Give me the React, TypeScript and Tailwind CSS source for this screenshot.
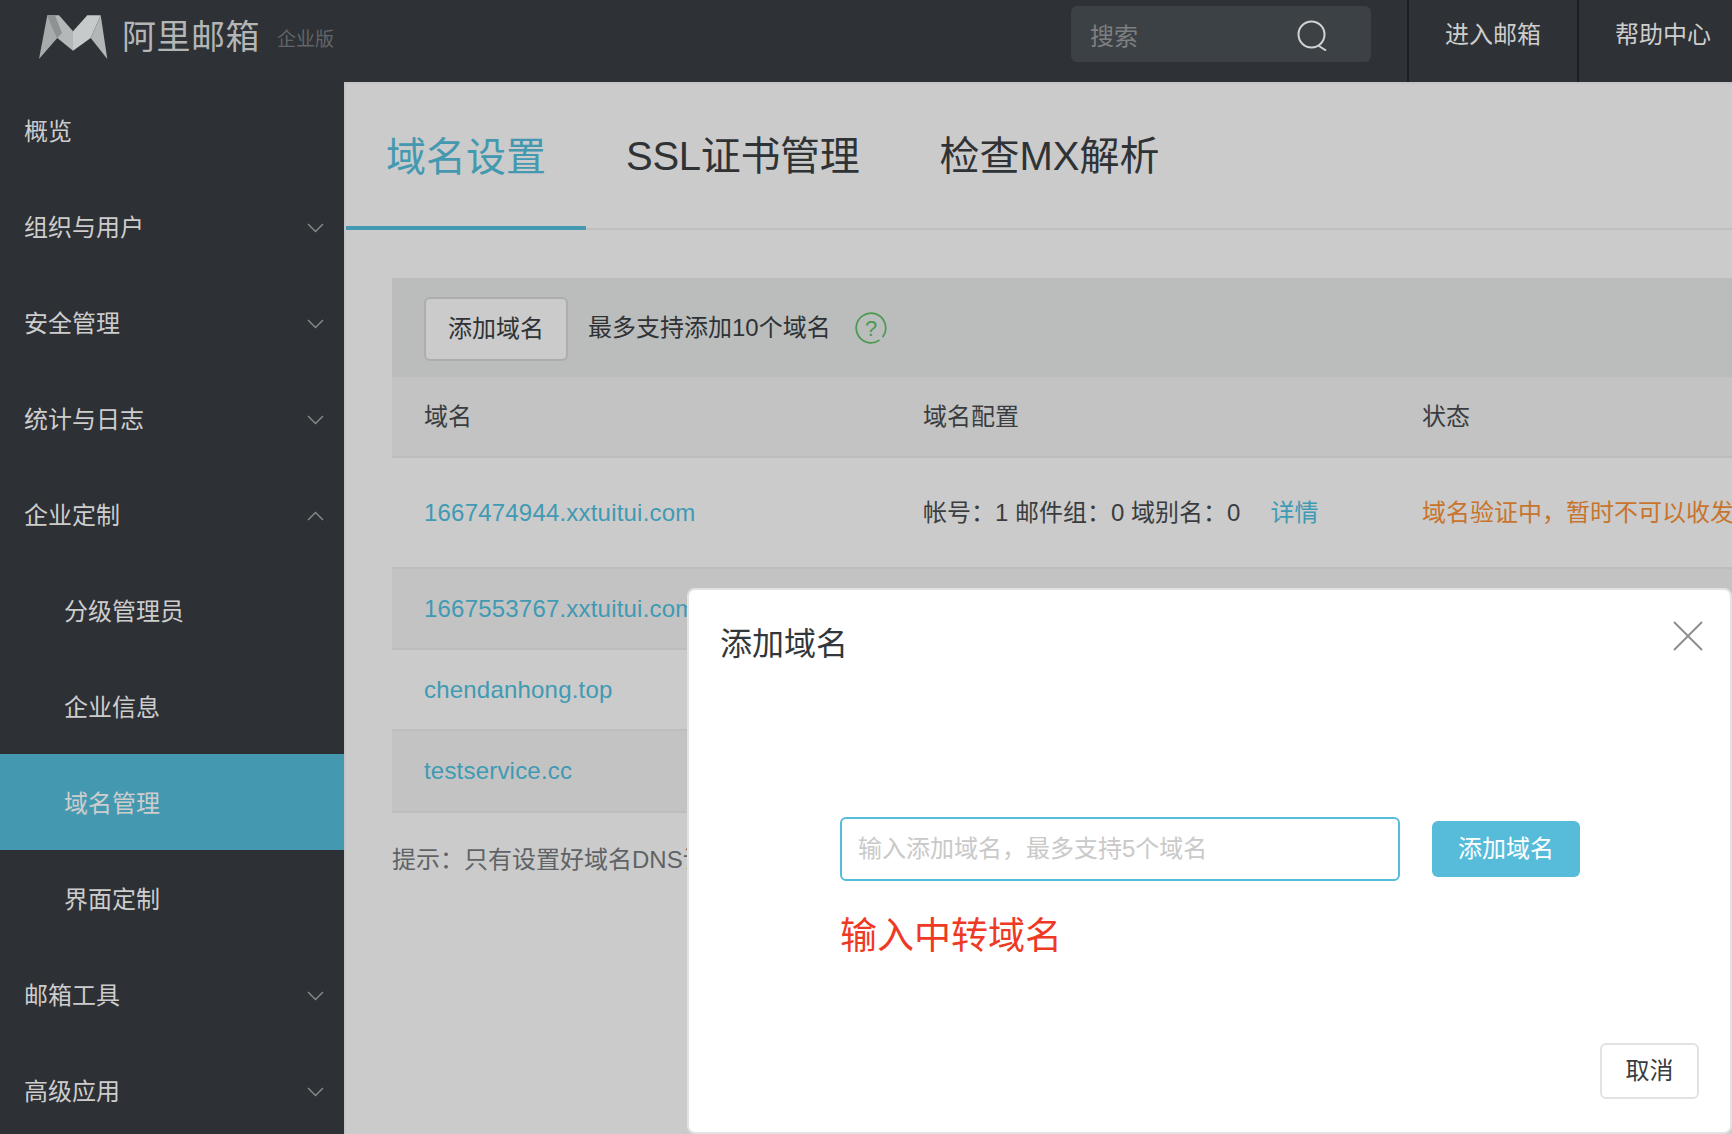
import React from 'react';

const fontStack = "font-['Liberation_Sans','Noto_Sans_CJK_SC',sans-serif]";

const menu = [
  { label: '概览' },
  { label: '组织与用户', arrow: 'down' },
  { label: '安全管理', arrow: 'down' },
  { label: '统计与日志', arrow: 'down' },
  { label: '企业定制', arrow: 'up' },
  { label: '分级管理员', sub: true },
  { label: '企业信息', sub: true },
  { label: '域名管理', sub: true, active: true },
  { label: '界面定制', sub: true },
  { label: '邮箱工具', arrow: 'down' },
  { label: '高级应用', arrow: 'down' },
];

const Chevron = ({ up }: { up?: boolean }) => (
  <svg width="17" height="10" viewBox="0 0 17 10" fill="none" className="shrink-0">
    <polyline
      points={up ? '1,9 8.5,1.5 16,9' : '1,1 8.5,8.5 16,1'}
      stroke="#8b8d8f"
      strokeWidth="1.3"
    />
  </svg>
);

const Logo = () => (
  <svg width="70" height="46" viewBox="0 0 70 46" className="shrink-0">
    <polygon points="1,45 9.3,1.3 19.3,24" fill="#a7abab" />
    <polygon points="9.3,1.3 21,1.3 35,17.3 35,36.7 19.3,24" fill="#b4b8b8" />
    <polygon points="9.3,1.3 17,1.3 24,19 19.3,24" fill="#8e9293" />
    <polygon points="49.3,1.3 62.7,1.3 52.7,24 35,36.7 35,17.3" fill="#c7caca" />
    <polygon points="62.7,1.3 69.3,45 52.7,24" fill="#b2b6b6" />
  </svg>
);

const SearchIcon = () => (
  <svg width="31" height="31" viewBox="0 0 31 31" fill="none" className="shrink-0">
    <circle cx="14.5" cy="14.5" r="13" stroke="#d2d2d2" strokeWidth="2" />
    <line x1="22" y1="26" x2="29" y2="30.5" stroke="#d2d2d2" strokeWidth="2" />
  </svg>
);

const HelpIcon = () => (
  <svg width="32" height="32" viewBox="0 0 32 32" fill="none" className="shrink-0">
    <circle
      cx="16"
      cy="16"
      r="14.8"
      stroke="#4b9a52"
      strokeWidth="1.8"
      strokeDasharray="88 5"
      transform="rotate(55 16 16)"
    />
    <text x="16" y="24" textAnchor="middle" fontSize="22" fill="#4b9a52" fontFamily="Liberation Sans">
      ?
    </text>
  </svg>
);

const CloseIcon = () => (
  <svg width="30" height="30" viewBox="0 0 30 30" fill="none" className="-mt-[2px]">
    <path d="M1 1 L29 29 M29 1 L1 29" stroke="#8f8f8f" strokeWidth="2" />
  </svg>
);

const Header = () => (
  <header className="flex h-[82px] shrink-0 items-stretch bg-[#2e3135]">
    <div className="flex flex-1 items-center pb-[8px] pl-[38px]">
      <Logo />
      <span className="ml-[14px] text-[34px] leading-[40px] tracking-[0.5px] text-[#b4b6b6]">阿里邮箱</span>
      <span className="mt-[6px] ml-[17px] text-[19px] leading-[24px] text-[#626568]">企业版</span>
    </div>
    <div className="flex items-center pr-[36px]">
      <div className="mb-[15px] flex h-[56px] w-[300px] items-center justify-between rounded-[6px] bg-[#3c4145] pt-[4px] pr-[43px] pl-[19px]">
        <span className="pt-[2px] text-[24px] leading-[32px] text-[#7d8082]">搜索</span>
        <SearchIcon />
      </div>
    </div>
    <div className="flex w-[170px] items-center border-l-2 border-[#1c1e21] pb-[12px] pl-[36px] text-[24px] leading-[32px] text-[#cdcdcd]">
      进入邮箱
    </div>
    <div className="flex w-[155px] items-center border-l-2 border-[#1c1e21] pb-[12px] pl-[36px] text-[24px] leading-[32px] whitespace-nowrap text-[#cdcdcd]">
      帮助中心
    </div>
  </header>
);

const Sidebar = () => (
  <aside className="w-[344px] shrink-0 bg-[#2d3034]">
    {menu.map((item) => (
      <div
        key={item.label}
        className={`flex h-24 items-center justify-between pt-[3px] pr-5 text-[24px] leading-[32px] text-[#cdcdcd] ${
          item.sub ? 'pl-[64px]' : 'pl-6'
        } ${item.active ? 'bg-[#4499b0]' : ''}`}
      >
        <span>{item.label}</span>
        {item.arrow && <Chevron up={item.arrow === 'up'} />}
      </div>
    ))}
  </aside>
);

const Tabs = () => (
  <div className="flex h-[146px] shrink-0 items-stretch border-b-2 border-[#bfbfbf] text-[40px] leading-[48px]">
    <div className="-mb-[2px] flex items-center border-b-4 border-[#4499b0] px-10 pt-[4px] text-[#4499b0]">域名设置</div>
    <div className="flex items-center px-10 tracking-[-0.3px] text-[#2f3336]">SSL证书管理</div>
    <div className="flex items-center px-10 text-[#2f3336]">检查MX解析</div>
  </div>
);

const DomainTable = () => (
  <div className="text-[24px] leading-[32px]">
    <div className="flex h-[99px] items-center bg-[#bbbdbc] pl-[32px] text-[#2f3336]">
      <button className="mt-[2px] h-[64px] w-[144px] rounded-[6px] border-2 border-[#adadad] bg-[#cbcbcb]">添加域名</button>
      <span className="mr-[24px] ml-[20px]">最多支持添加10个域名</span>
      <HelpIcon />
    </div>
    <div className="grid h-[81px] grid-cols-[499px_499px_1fr] items-center border-b-2 border-[#bdbdbd] bg-[#c3c3c3] pl-[32px] text-[#3a3d40]">
      <span>域名</span>
      <span>域名配置</span>
      <span>状态</span>
    </div>
    <div className="grid h-[111px] grid-cols-[499px_499px_1fr] items-center border-b-2 border-[#bdbdbd] pl-[32px]">
      <a className="tracking-[0.2px] text-[#3f9ab3]">1667474944.xxtuitui.com</a>
      <span className="whitespace-nowrap text-[#3a3d40]">
        帐号：1 邮件组：0 域别名：0<a className="ml-[30px] text-[#3f9ab3]">详情</a>
      </span>
      <span className="whitespace-nowrap text-[#c8742c]">域名验证中，暂时不可以收发邮件</span>
    </div>
    <div className="flex h-[81px] items-center border-b-2 border-[#bdbdbd] bg-[#c3c3c3] pl-[32px] tracking-[0.2px] text-[#3f9ab3]">
      1667553767.xxtuitui.com
    </div>
    <div className="flex h-[81px] items-center border-b-2 border-[#bdbdbd] pl-[32px] tracking-[0.2px] text-[#3f9ab3]">chendanhong.top</div>
    <div className="flex h-[82px] items-center border-b-2 border-[#bdbdbd] bg-[#c3c3c3] pl-[32px] tracking-[0.2px] text-[#3f9ab3]">testservice.cc</div>
  </div>
);

const AddDomainDialog = () => (
  <div className="absolute top-[588px] left-[687px] flex h-[546px] w-[1045px] flex-col rounded-[8px] border-2 border-[#e2e2e2] bg-white">
    <div className="flex items-start justify-between pt-[33px] pr-[27px] pl-[31px]">
      <span className="text-[32px] leading-[42px] text-[#33373a]">添加域名</span>
      <CloseIcon />
    </div>
    <div className="mt-[152px] flex items-center pl-[151px]">
      <div className="flex h-[64px] w-[560px] items-center rounded-[6px] border-2 border-[#56bcd9] pl-[16px] text-[24px] leading-[32px] text-[#c9c9c9]">
        输入添加域名，最多支持5个域名
      </div>
      <button className="ml-[32px] h-[56px] w-[148px] rounded-[6px] bg-[#56bcda] text-[24px] leading-[32px] text-white">添加域名</button>
    </div>
    <div className="mt-[32px] pl-[151px] text-[37px] leading-[48px] text-[#ee3a24]">输入中转域名</div>
    <div className="mt-auto flex justify-end pr-[31px] pb-[33px]">
      <button className="h-[56px] w-[99px] rounded-[6px] border-2 border-[#e2e2e2] text-[24px] leading-[32px] text-[#3a3d40]">取消</button>
    </div>
  </div>
);

export default function App() {
  return (
    <div className={`relative flex h-screen flex-col overflow-hidden bg-[#cbcbcb] ${fontStack}`}>
      <Header />
      <div className="flex min-h-0 flex-1">
        <Sidebar />
        <main className="min-w-0 flex-1 overflow-hidden border-t-2 border-l-2 border-[#c4c4c4] bg-[#cbcbcb]">
          <Tabs />
          <div className="pt-[48px] pl-[46px]">
            <DomainTable />
            <p className="mt-[31px] text-[24px] leading-[32px] whitespace-nowrap text-[#606366]">提示：只有设置好域名DNS记录</p>
          </div>
        </main>
      </div>
      <AddDomainDialog />
    </div>
  );
}
